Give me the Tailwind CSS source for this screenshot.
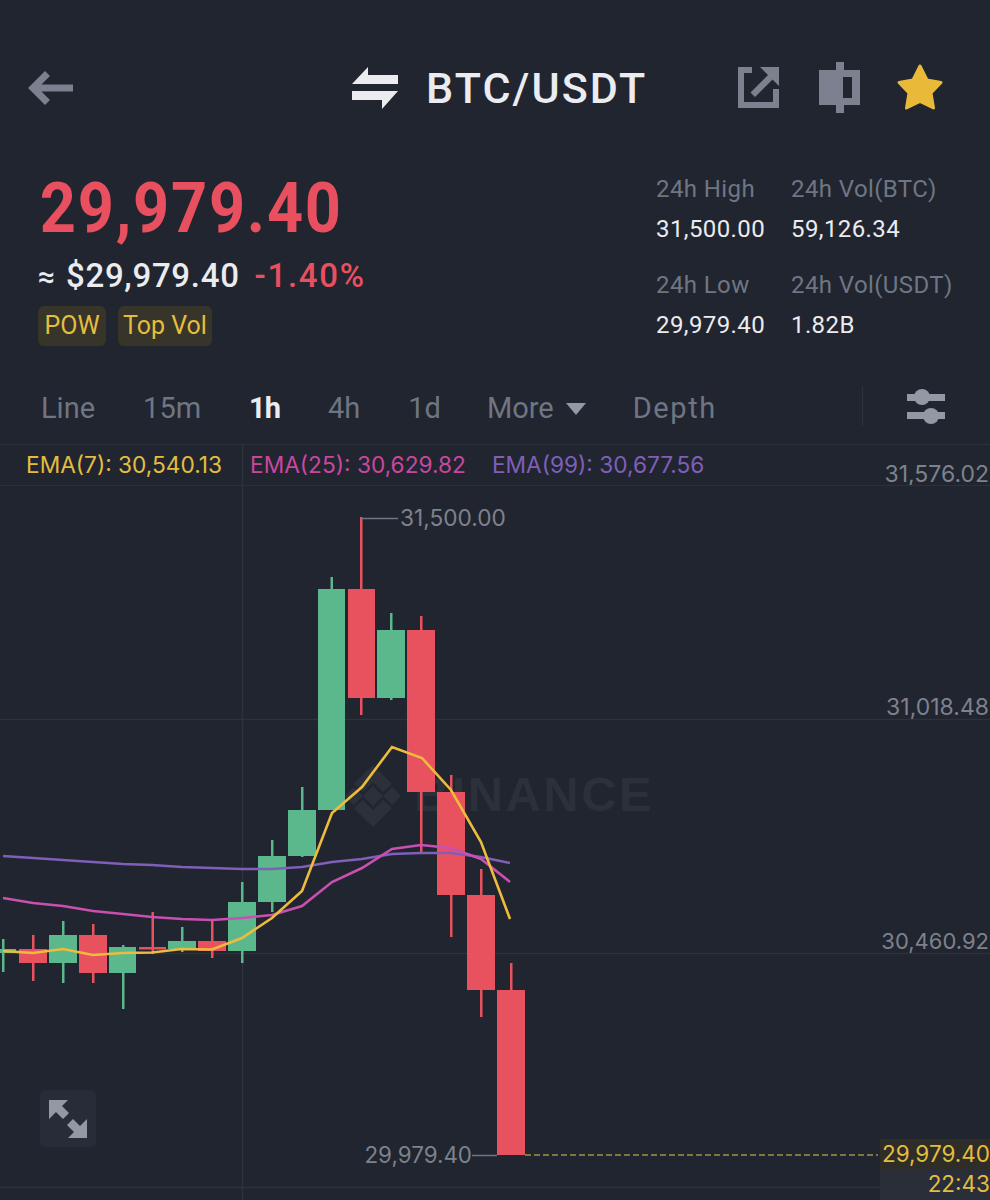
<!DOCTYPE html>
<html lang="en">
  <head>
    <meta charset="UTF-8" />
    <title>BTC/USDT</title>
    <script src="https://cdn.jsdelivr.net/npm/@tailwindcss/browser@4"></script>
  </head>
  <body class="bg-[#21252f] font-['Roboto',sans-serif] overflow-hidden">
    <div class="w-[990px] h-[1200px] relative overflow-hidden flex flex-col">
      <!-- Top bar -->
      <header class="h-[169px] pt-[60px] pl-[28px] pr-[46px] shrink-0">
        <div class="flex items-center h-14">
          <svg class="w-[46px] h-[40px] shrink-0" viewBox="28 63 46 40" fill="none" stroke="#7b818e" stroke-width="7">
            <path d="M73 83H33M47.500 68.500L33 83L47.500 97.500" />
          </svg>
          <svg class="w-[46px] h-[42px] ml-[278px] shrink-0" viewBox="352 66 46 42" fill="#eaecef">
            <path d="M352 83L368 66V74H398V83ZM352 90H398L382 108V99H352Z" />
          </svg>
          <h1 class="ml-[28px] text-[43px] leading-none font-medium text-[#eaecef] tracking-[2.100px]">BTC/USDT</h1>
          <svg class="ml-auto w-[206px] h-[52px] shrink-0" viewBox="738 61 206 52">
            <path fill="#7b818e" d="M738 66H752V72H744V101H773V88H779V107H738Z" />
            <path fill="#7b818e" d="M760 66H779V85L772.500 78.500L755 96L750.500 91.500L768 74Z" />
            <path fill="#7b818e" d="M836 61H844V69H860V104H844V112H836V104H819V69H836Z" />
            <path fill="#21252f" d="M843 76H852V97H843Z" />
            <path fill="#e9b93a" stroke="#e9b93a" stroke-width="3" stroke-linejoin="round" d="M920 65L927 79L941 81.500L931 92L933.500 107L920 100.500L906.500 107L909 92L899 81.500L913 79Z" />
          </svg>
        </div>
      </header>

      <!-- Price and 24h stats -->
      <section class="h-[203px] shrink-0 flex justify-between">
        <div class="pt-[7px] pl-[38px]">
          <div class="h-16 flex items-center pl-[2px] text-[70px] leading-none font-bold text-[#e8505f] tracking-[2px] scale-x-[0.9] origin-left whitespace-nowrap">29,979.40</div>
          <div class="mt-4 h-10 flex items-center text-[33px] font-medium">
            <span class="text-[#eaecef] w-[28px] text-[30px]">≈</span>
            <span class="text-[#eaecef] tracking-[0.700px]">$29,979.40</span>
            <span class="ml-[15px] text-[#e8505f] tracking-[1.700px]">-1.40%</span>
          </div>
          <div class="mt-[10px] flex gap-3">
            <span class="h-10 w-[68px] flex items-center justify-center rounded-md bg-[#37342a] text-[#e4bd3e] text-[25px]">POW</span>
            <span class="h-10 w-[94px] flex items-center justify-center rounded-md bg-[#37342a] text-[#e4bd3e] text-[25px]">Top Vol</span>
          </div>
        </div>
        <div class="grid grid-cols-[135px_199px] text-[24px] tracking-[0.4px] leading-10 content-start">
          <div class="text-[#6f7683]">24h High</div>
          <div class="text-[#6f7683]">24h Vol(BTC)</div>
          <div class="text-[#eaecef]">31,500.00</div>
          <div class="text-[#eaecef]">59,126.34</div>
          <div class="text-[#6f7683] mt-4">24h Low</div>
          <div class="text-[#6f7683] mt-4">24h Vol(USDT)</div>
          <div class="text-[#eaecef]">29,979.40</div>
          <div class="text-[#eaecef]">1.82B</div>
        </div>
      </section>

      <!-- Interval tabs -->
      <nav class="h-[72px] shrink-0 flex items-center pl-[41px] pt-[2px] gap-12 text-[29px] text-[#6f7683]">
        <span>Line</span>
        <span>15m</span>
        <span class="font-bold text-[#eaecef] tracking-[-1px]">1h</span>
        <span>4h</span>
        <span>1d</span>
        <span class="-ml-[2px] flex items-center gap-3">
          More
          <svg class="w-5 h-3" viewBox="0 0 20 12" fill="#9398a5"><path d="M0 0H20L10 12Z" /></svg>
        </span>
        <span class="-ml-px tracking-[1.600px]">Depth</span>
        <div class="absolute left-[862px] top-[386px] h-10 w-px bg-[#2e323c]"></div>
        <svg class="absolute left-[907px] top-[388px] w-[38px] h-[37px]" viewBox="907 388 38 37" fill="#9398a5">
          <path d="M907 394H945V401H907ZM907 412H945V419H907Z" />
          <circle cx="922" cy="397" r="8" />
          <circle cx="931" cy="416" r="8" />
        </svg>
      </nav>

      <!-- EMA legend -->
      <div class="h-[42px] shrink-0 border-t border-b border-[#2c303a] flex items-center pl-[26px] text-[22.700px] font-['Inter',sans-serif] relative z-10 whitespace-nowrap">
        <span class="w-[224px] text-[#e4bd3e]">EMA(7): 30,540.13</span>
        <span class="text-[#c9479f]">EMA(25): 30,629.82</span>
        <span class="ml-[26px] text-[#7f5fb8]">EMA(99): 30,677.56</span>
      </div>

      <!-- Chart canvas -->
      <div class="absolute left-0 top-[444px] w-[990px] h-[756px] font-['Inter',sans-serif]">
        <!-- Watermark, under the candles -->
        <svg class="absolute left-[345px] top-[320px] w-[56px] h-[64px]" viewBox="0 0 56 64" fill="#2c303a">
          <path d="M28 1L47 20L38 28L28 18L18 28L9 20ZM0 32L9 23L18 32L9 41ZM47 23L56 32L47 41L38 32ZM28 22L38 32L28 42L18 32ZM9 44L18 36L28 46L38 36L47 44L28 63Z" />
        </svg>
        <span class="absolute left-[414px] top-[322px] text-[49px] leading-[56px] font-bold font-['Liberation_Sans',sans-serif] text-[#2c303a] tracking-[2.400px]">BINANCE</span>

        <svg class="absolute inset-0 w-[990px] h-[756px]" viewBox="0 444 990 756" fill="none">
          <!-- Grid -->
          <path stroke="#2e323c" stroke-width="1.500" d="M0 719.500H990M0 953.500H990M0 1187.500H880M242.500 444V1200" />

          <!-- Up candles -->
          <g fill="#5ab88c">
            <rect x="2" y="939" width="2.500" height="33" /><rect x="0" y="949" width="16" height="4" />
            <rect x="62" y="921" width="2.500" height="62" /><rect x="49" y="935" width="28" height="28" />
            <rect x="122" y="945" width="2.500" height="64" /><rect x="109" y="947" width="27" height="26" />
            <rect x="181" y="927" width="2.500" height="25" /><rect x="168" y="941" width="28" height="8" />
            <rect x="241" y="882" width="2.500" height="81" /><rect x="228" y="902" width="28" height="49" />
            <rect x="271" y="840" width="2.500" height="72" /><rect x="258" y="856" width="28" height="46" />
            <rect x="301" y="787" width="2.500" height="70" /><rect x="288" y="810" width="28" height="46" />
            <rect x="330.500" y="577" width="2.500" height="20" /><rect x="318" y="589" width="27" height="221" />
            <rect x="390" y="613" width="2.500" height="87" /><rect x="377" y="630" width="28" height="68" />
          </g>

          <!-- Down candles -->
          <g fill="#e8525f">
            <rect x="32" y="935" width="2.500" height="46" /><rect x="19" y="949" width="28" height="14" />
            <rect x="92" y="924" width="2.500" height="59" /><rect x="79" y="935" width="28" height="38" />
            <rect x="151.500" y="912" width="2.500" height="42" /><rect x="139" y="947" width="27" height="2.500" />
            <rect x="211" y="921" width="2.500" height="37" /><rect x="198" y="941" width="28" height="10" />
            <rect x="360" y="517" width="2.500" height="198" /><rect x="348" y="589" width="27" height="109" />
            <rect x="420" y="616" width="2.500" height="236" /><rect x="407" y="630" width="28" height="162" />
            <rect x="450" y="775" width="2.500" height="162" /><rect x="437" y="792" width="28" height="103" />
            <rect x="480" y="869" width="2.500" height="148" /><rect x="467" y="895" width="28" height="95" />
            <rect x="510" y="963" width="2.500" height="30" /><rect x="497" y="990" width="28" height="165" />
          </g>

          <!-- EMA lines -->
          <polyline stroke="#7f5fb8" stroke-width="2.600" points="3,856 33,858 63,860 93,862 123,864 152,865 182,867 212,868 242,869 272,869 302,867 332,862 362,859 392,854 421,853 451,853 481,857 510,863" />
          <polyline stroke="#c94fb0" stroke-width="2.600" points="3,898 33,903 63,906 93,911 123,914 152,917 182,919 212,920 242,918 272,915 302,906 332,882 362,868 392,849 421,845 451,848 481,859 510,882" />
          <polyline stroke="#eebc3c" stroke-width="2.600" points="3,951 33,953 63,949 93,955 123,953 152,952.500 182,949 212,949.500 242,938 272,918 302,891 332,813 362,787 392,747 422,758 451,790 481,842 510,919" />

          <!-- Markers -->
          <path stroke="#6f7683" stroke-width="1.500" d="M361 518.500H398M472 1155.500H497" />
          <path stroke="#7f7540" stroke-width="2" stroke-dasharray="6 3" d="M525 1155H878" />
        </svg>

        <span class="absolute right-[1px] top-[16px] text-[23px] leading-7 text-[#7d828d]">31,576.02</span>
        <span class="absolute right-[1px] top-[249px] text-[23px] leading-7 text-[#7d828d]">31,018.48</span>
        <span class="absolute right-[1px] top-[483px] text-[22px] leading-7 text-[#7d828d]">30,460.92</span>
        <span class="absolute left-[400px] top-[60px] text-[22.700px] leading-7 text-[#7d828d]">31,500.00</span>
        <span class="absolute right-[518px] top-[697px] text-[22.400px] leading-7 text-[#7d828d]">29,979.40</span>

        <!-- Last price tag -->
        <div class="absolute left-[880px] top-[695px] w-[110px] h-[61px] flex flex-col items-end text-[22.500px] leading-[30px] text-[#e4bd3e] bg-[#2a2e39]">
          <span class="w-full text-right bg-[#2f2d28]">29,979.40</span>
          <span>22:43</span>
        </div>

        <!-- Fullscreen button -->
        <button class="absolute left-[40px] top-[646px] w-14 h-[57px] rounded-md bg-[#272c38] flex items-center justify-center">
          <svg class="w-10 h-10" viewBox="48 1099 40 40" fill="#9398a5">
            <path d="M49 1100H68L62 1106L69 1113L63 1119L56 1112L49 1119Z" />
            <path d="M87 1138H68L74 1132L67 1125L73 1119L80 1126L87 1119Z" />
          </svg>
        </button>
      </div>
    </div>
  </body>
</html>
